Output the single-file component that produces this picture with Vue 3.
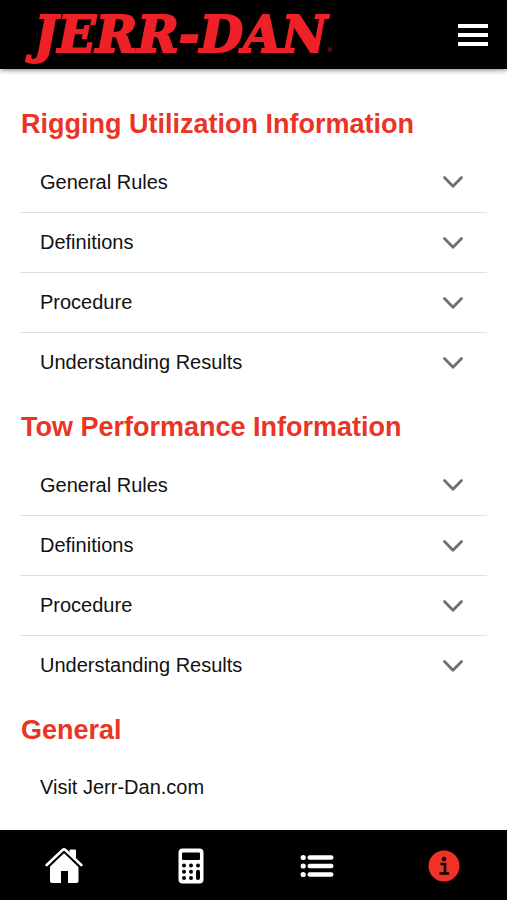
<script setup>
import { ref } from 'vue'

const topics = ['General Rules', 'Definitions', 'Procedure', 'Understanding Results']
const sections = [
  { title: 'Rigging Utilization Information', topics },
  { title: 'Tow Performance Information', topics },
]
const open = ref('')
const toggle = (key) => {
  open.value = open.value === key ? '' : key
}
</script>

<template>
  <div class="app">
    <header class="top">
      <a class="logo" href="#">JERR-DAN<span class="mark">®</span></a>
      <button class="menu" type="button" aria-label="Menu">
        <svg width="30" height="24" viewBox="0 0 30 24" fill="#fff">
          <path d="M0 1h30v4H0zM0 10h30v4H0zM0 19h30v4H0z" />
        </svg>
      </button>
    </header>

    <main class="content">
      <section v-for="section in sections" :key="section.title">
        <h2>{{ section.title }}</h2>
        <ul>
          <li v-for="topic in section.topics" :key="topic">
            <button
              class="row"
              type="button"
              :aria-expanded="open === section.title + topic"
              @click="toggle(section.title + topic)"
            >
              <span>{{ topic }}</span>
              <svg class="chevron" width="22" height="14" viewBox="0 0 22 14" fill="none" stroke="#707070" stroke-width="2.800" stroke-linecap="round" stroke-linejoin="round">
                <path d="M2.500 2.500 11 11.200l8.500-8.700" />
              </svg>
            </button>
          </li>
        </ul>
      </section>
      <section>
        <h2>General</h2>
        <a class="row" href="#">Visit Jerr-Dan.com</a>
      </section>
    </main>

    <nav class="tabs">
      <a href="#" aria-label="Home">
        <svg width="38" height="36" viewBox="0 0 38 36">
          <path d="M25 5.500V2h5.500v10L25 7z" fill="#fff" stroke="#fff" stroke-linejoin="round" />
          <path d="M5 18 19 5l14.500 13v15q0 2-2 2H23V23h-7v12H7q-2 0-2-2z" fill="#fff" />
          <path d="M2 18.500 17.500 3.500q1.500-1.200 3 0L36 18.500" fill="none" stroke="#000" stroke-width="4.500" />
          <path d="M1.700 17 17.500 2q1.500-1.200 3 0L36.300 17" fill="none" stroke="#fff" stroke-width="2.600" stroke-linecap="round" />
        </svg>
      </a>
      <a href="#" aria-label="Calculator">
        <svg width="26" height="36" viewBox="0 0 26 36">
          <rect x=".5" y=".5" width="25" height="35" rx="4" fill="#fff" />
          <rect x="4" y="4.500" width="18" height="7.500" rx="1" />
          <circle cx="6" cy="17.500" r="2" /><circle cx="13" cy="17.500" r="2" /><circle cx="20" cy="17.500" r="2" />
          <circle cx="6" cy="23.700" r="2" /><circle cx="13" cy="23.700" r="2" />
          <circle cx="6" cy="30" r="2" /><circle cx="13" cy="30" r="2" />
          <rect x="18" y="21.700" width="4" height="10.300" rx="2" />
        </svg>
      </a>
      <a href="#" aria-label="Lists">
        <svg width="34" height="24" viewBox="0 0 34 24" fill="#fff">
          <circle cx="3.200" cy="3.500" r="2.600" /><rect x="7.500" y="1.300" width="26" height="4.400" rx="2.200" />
          <circle cx="3.200" cy="12" r="2.600" /><rect x="7.500" y="9.800" width="26" height="4.400" rx="2.200" />
          <circle cx="3.200" cy="20.500" r="2.600" /><rect x="7.500" y="18.300" width="26" height="4.400" rx="2.200" />
        </svg>
      </a>
      <a href="#" aria-label="Information" aria-current="page">
        <svg width="32" height="32" viewBox="0 0 32 32">
          <circle cx="16" cy="16" r="15.500" fill="#f03226" />
          <circle cx="16" cy="9" r="2.300" />
          <path d="M12.500 14h4.500v9M11.500 23.500h9.500" fill="none" stroke="#000" stroke-width="2.600" />
        </svg>
      </a>
    </nav>
  </div>
</template>

<style>
body {
  margin: 0;
  background: #fff;
}
</style>

<style scoped>
.app {
  min-height: 100vh;
  display: flex;
  flex-direction: column;
  font-family: "Liberation Sans", Arial, sans-serif;
  color: #111;
}
.top {
  height: 69px;
  box-sizing: border-box;
  padding: 0 19px 0 34px;
  display: flex;
  align-items: center;
  justify-content: space-between;
  background: #000;
  box-shadow: 0 1px 5px rgba(0, 0, 0, 0.5);
}
.logo {
  display: flex;
  align-items: baseline;
  color: #ed2127;
  font: italic bold 50px/68px "DejaVu Serif", serif;
  -webkit-text-stroke: 2px #ed2127;
  text-decoration: none;
}
.mark {
  font: 6px/8px "Liberation Sans", sans-serif;
  -webkit-text-stroke: 0;
}
.menu {
  display: flex;
  padding: 0;
  border: 0;
  background: none;
}
.content {
  flex: 1;
  padding: 20px 20px 10px;
}
h2 {
  margin: 0;
  padding: 18px 0 11px 1px;
  font-size: 27px;
  line-height: 34px;
  color: #e93426;
}
ul {
  margin: 0;
  padding: 0;
  list-style: none;
}
li + li {
  border-top: 1px solid #dedede;
}
.row {
  display: flex;
  align-items: center;
  justify-content: space-between;
  box-sizing: border-box;
  width: 100%;
  height: 59px;
  padding: 0 23px 0 20px;
  border: 0;
  background: none;
  color: inherit;
  font: inherit;
  font-size: 20px;
  text-align: left;
  text-decoration: none;
}
li:first-child .row {
  height: 60px;
}
.row[aria-expanded="true"] .chevron {
  transform: rotate(180deg);
}
.tabs {
  display: grid;
  grid-template-columns: repeat(4, 1fr);
  box-sizing: border-box;
  height: 70px;
  padding: 2px 0 0 1px;
  background: #000;
}
.tabs a {
  display: flex;
  align-items: center;
  justify-content: center;
}
</style>
